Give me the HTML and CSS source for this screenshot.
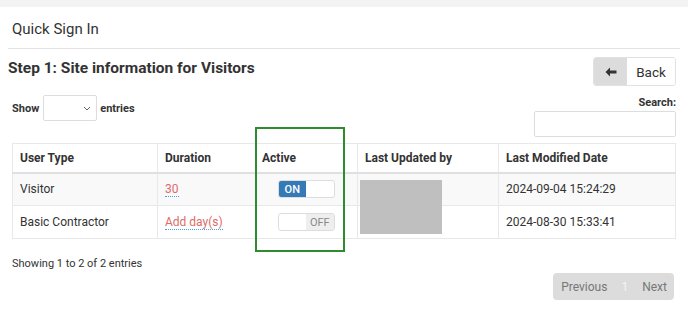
FILE: index.html
```html
<html>
    <head>
        <meta charset="utf-8" />
        <title>Quick Sign In</title>
        <link rel="stylesheet" href="styles.css">
    </head>
    <body>
        <div class="topbar"></div>
        <div class="page">
            <h1 class="page-title">Quick Sign In</h1>

            <div class="step-head">
                <h2>Step 1: Site information for Visitors</h2>
                <a class="back-btn" href="#">
                    <span class="back-icon">
                        <svg width="12" height="10" viewBox="0 0 12 10"><path d="M5 0.5 L0.5 5 L5 9.5 L5 6.6 L11.5 6.6 L11.5 3.4 L5 3.4 Z" fill="#333"/></svg>
                    </span>
                    <span class="back-text">Back</span>
                </a>
            </div>

            <div class="controls">
                <label class="length">Show
                    <span class="select">
                        <svg width="8" height="5" viewBox="0 0 8 5"><path d="M1 1 L4 4 L7 1" fill="none" stroke="#666" stroke-width="1"/></svg>
                    </span>
                    entries</label>
                <div class="search">
                    <label>Search:</label>
                    <input type="text">
                </div>
            </div>

            <div class="table-wrap">
                <table class="grid">
                    <colgroup>
                        <col style="width: 145px">
                        <col style="width: 99px">
                        <col style="width: 101px">
                        <col style="width: 141px">
                        <col>
                    </colgroup>
                    <thead>
                        <tr>
                            <th>User Type</th>
                            <th>Duration</th>
                            <th class="c-active">Active</th>
                            <th>Last Updated by</th>
                            <th>Last Modified Date</th>
                        </tr>
                    </thead>
                    <tbody>
                        <tr class="odd">
                            <td>Visitor</td>
                            <td><a class="editable" href="#">30</a></td>
                            <td class="toggle-cell"><span class="toggle on"><span class="t-on">ON</span><span class="t-blank"></span></span></td>
                            <td></td>
                            <td>2024-09-04 15:24:29</td>
                        </tr>
                        <tr>
                            <td>Basic Contractor</td>
                            <td><a class="editable" href="#">Add day(s)</a></td>
                            <td class="toggle-cell"><span class="toggle off"><span class="t-blank"></span><span class="t-off">OFF</span></span></td>
                            <td></td>
                            <td>2024-08-30 15:33:41</td>
                        </tr>
                    </tbody>
                </table>
                <div class="redact"></div>
            </div>

            <div class="footer">
                <div class="info">Showing 1 to 2 of 2 entries</div>
                <div class="pager">
                    <span>Previous</span>
                    <span class="current">1</span>
                    <span>Next</span>
                </div>
            </div>
        </div>
        <div class="highlight"></div>
    </body>
</html>
```

FILE: styles.css
```css
html, body {
    margin: 0;
    padding: 0;
    font-family: Roboto, "Liberation Sans", sans-serif;
    color: #333;
    background: #fff;
}

.topbar {
    height: 7px;
    background: #f3f3f3;
}

.page {
    padding: 0 8px;
}

.page-title {
    margin: 0;
    padding: 12px 4px 9px;
    font-size: 15px;
    font-weight: 400;
    line-height: 20px;
    border-bottom: 1px solid #e3e3e3;
}

.step-head {
    display: flex;
    justify-content: space-between;
    align-items: flex-start;
    padding: 8px 4px 0 0;
}

.step-head h2 {
    margin: 0;
    font-size: 15.5px;
    font-weight: 700;
    line-height: 22px;
}

.back-btn {
    display: flex;
    height: 29px;
    border: 1px solid #e2e2e2;
    border-radius: 3px;
    overflow: hidden;
    text-decoration: none;
    color: #333;
    font-size: 13.5px;
    box-sizing: border-box;
}

.back-icon {
    width: 33px;
    background: #dcdcdc;
    display: flex;
    align-items: center;
    justify-content: center;
}

.back-text {
    width: 48px;
    display: flex;
    align-items: center;
    justify-content: center;
    background: #fff;
}

.controls {
    display: flex;
    justify-content: space-between;
    padding: 9px 4px 0;
    font-size: 11px;
    font-weight: 700;
}

.length {
    display: flex;
    align-items: center;
    height: 26px;
}

.select {
    width: 54px;
    height: 26px;
    box-sizing: border-box;
    border: 1px solid #ddd;
    border-radius: 2px;
    margin: 0 3px 0 4px;
    display: flex;
    align-items: center;
    justify-content: flex-end;
    padding-right: 5px;
}

.search {
    display: flex;
    flex-direction: column;
    align-items: flex-end;
}

.search label {
    line-height: 14px;
    margin-top: 1px;
}

.search input {
    width: 142px;
    height: 26px;
    box-sizing: border-box;
    border: 1px solid #ddd;
    border-radius: 2px;
    margin-top: 1px;
}

.table-wrap {
    position: relative;
    margin: 6px 4px 0;
}

.grid {
    width: 100%;
    table-layout: fixed;
    border-collapse: collapse;
    font-size: 12px;
}

.grid th, .grid td {
    border: 1px solid #e8e8e8;
    padding: 0 7px;
    text-align: left;
}

.grid th {
    height: 29px;
    border-bottom: 2px solid #e0e0e0;
    font-weight: 700;
}

.grid th.c-active {
    padding-left: 5px;
}

.grid td {
    height: 33px;
}

.grid tr.odd td {
    background: #f9f9f9;
}

.editable {
    color: #de6b68;
    text-decoration: none;
    border-bottom: 1px dotted #4a9fd8;
}

.toggle-cell {
    text-align: center !important;
}

.toggle {
    display: inline-flex;
    width: 57px;
    height: 18px;
    box-sizing: border-box;
    border: 1px solid #ddd;
    border-radius: 3px;
    overflow: hidden;
    vertical-align: middle;
    font-size: 11px;
    background: #fff;
    margin-left: -2px;
}

.toggle span {
    width: 50%;
    display: flex;
    align-items: center;
    justify-content: center;
}

.t-on {
    background: #337ab7;
    color: #fff;
    font-weight: 500;
}

.t-off {
    background: #eee;
    color: #888;
}

.redact {
    position: absolute;
    left: 348px;
    top: 37px;
    width: 82px;
    height: 54px;
    background: #bfbfbf;
}

.footer {
    display: flex;
    justify-content: space-between;
    align-items: flex-start;
    padding: 18px 6px 0 4px;
}

.info {
    font-size: 11px;
    line-height: 14px;
}

.pager {
    display: flex;
    align-items: center;
    margin-top: 16px;
    height: 27px;
    background: #dcdcdc;
    border-radius: 4px;
    font-size: 12px;
    color: #777;
    padding: 0 7px 0 8px;
    gap: 14px;
}

.pager .current {
    color: #f4f4f4;
}

.highlight {
    position: absolute;
    left: 255px;
    top: 127px;
    width: 86px;
    height: 121px;
    border: 2px solid #2e8b2e;
}
```
